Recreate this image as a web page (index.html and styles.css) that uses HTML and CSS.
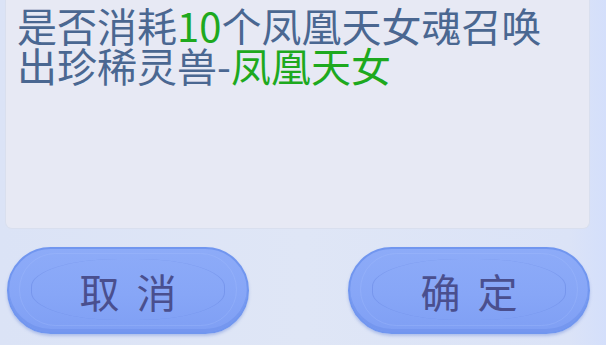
FILE: index.html
```html
<!DOCTYPE html>
<html>
<head>
    <meta charset="utf-8">
    <title>召唤确认</title>
    <link rel="stylesheet" href="styles.css">
</head>
<body>
    <div class="dialog">
        <div class="message">
            是否消耗<span class="hl">10</span>个凤凰天女魂召唤出珍稀灵兽-<span class="hl">凤凰天女</span>
        </div>
        <div class="actions">
            <button class="btn" id="cancelButton">取 消</button>
            <button class="btn" id="okButton">确 定</button>
        </div>
    </div>
</body>
</html>
```

FILE: styles.css
```css
html, body {
    margin: 0;
    height: 100%;
}

body {
    background: linear-gradient(90deg, #dbe3f6 0%, #dfe6f6 50%, #dbe3f7 94%, #d4dffb 100%);
    font-family: 'Noto Sans CJK SC', 'Noto Sans', sans-serif;
    overflow: hidden;
}

.dialog {
    display: flex;
    flex-direction: column;
    padding: 0 16px 0 5px;
}

.message {
    height: 223px;
    padding: 5px 12px 0 11px;
    background: #e7e9f4;
    border: 1px solid #d9dfee;
    border-top: none;
    border-radius: 0 0 7px 7px;
    color: #4a6791;
    font-size: 40px;
    line-height: 40px;
}

.hl {
    color: #1ea91e;
}

.actions {
    display: flex;
    justify-content: space-between;
    padding: 0 0 0 2px;
    margin-top: 18px;
}

.btn {
    position: relative;
    width: 242px;
    height: 87px;
    border: 2px solid #7196ef;
    border-radius: 44px;
    background: linear-gradient(180deg, #8dabf8 0%, #87a6f7 55%, #7f9ff4 100%);
    box-shadow: 0 2px 3px rgba(90, 120, 210, 0.35), inset 0 -3px 0 rgba(110, 145, 235, 0.6);
    color: #4a4f8e;
    font-family: 'Noto Sans CJK SC', sans-serif;
    font-size: 40px;
    letter-spacing: 4px;
    text-indent: 4px;
    padding: 0;
    cursor: pointer;
}

.btn::before {
    content: '';
    position: absolute;
    top: 10px;
    left: 22px;
    right: 22px;
    bottom: 12px;
    border-left: 1.5px solid rgba(100, 130, 225, 0.45);
    border-right: 1.5px solid rgba(100, 130, 225, 0.45);
    border-radius: 45%;
}

.btn::after {
    content: '';
    position: absolute;
    top: 4px;
    left: 10px;
    right: 10px;
    bottom: 6px;
    border: 1px solid rgba(170, 195, 255, 0.25);
    border-radius: 38px;
}
```
